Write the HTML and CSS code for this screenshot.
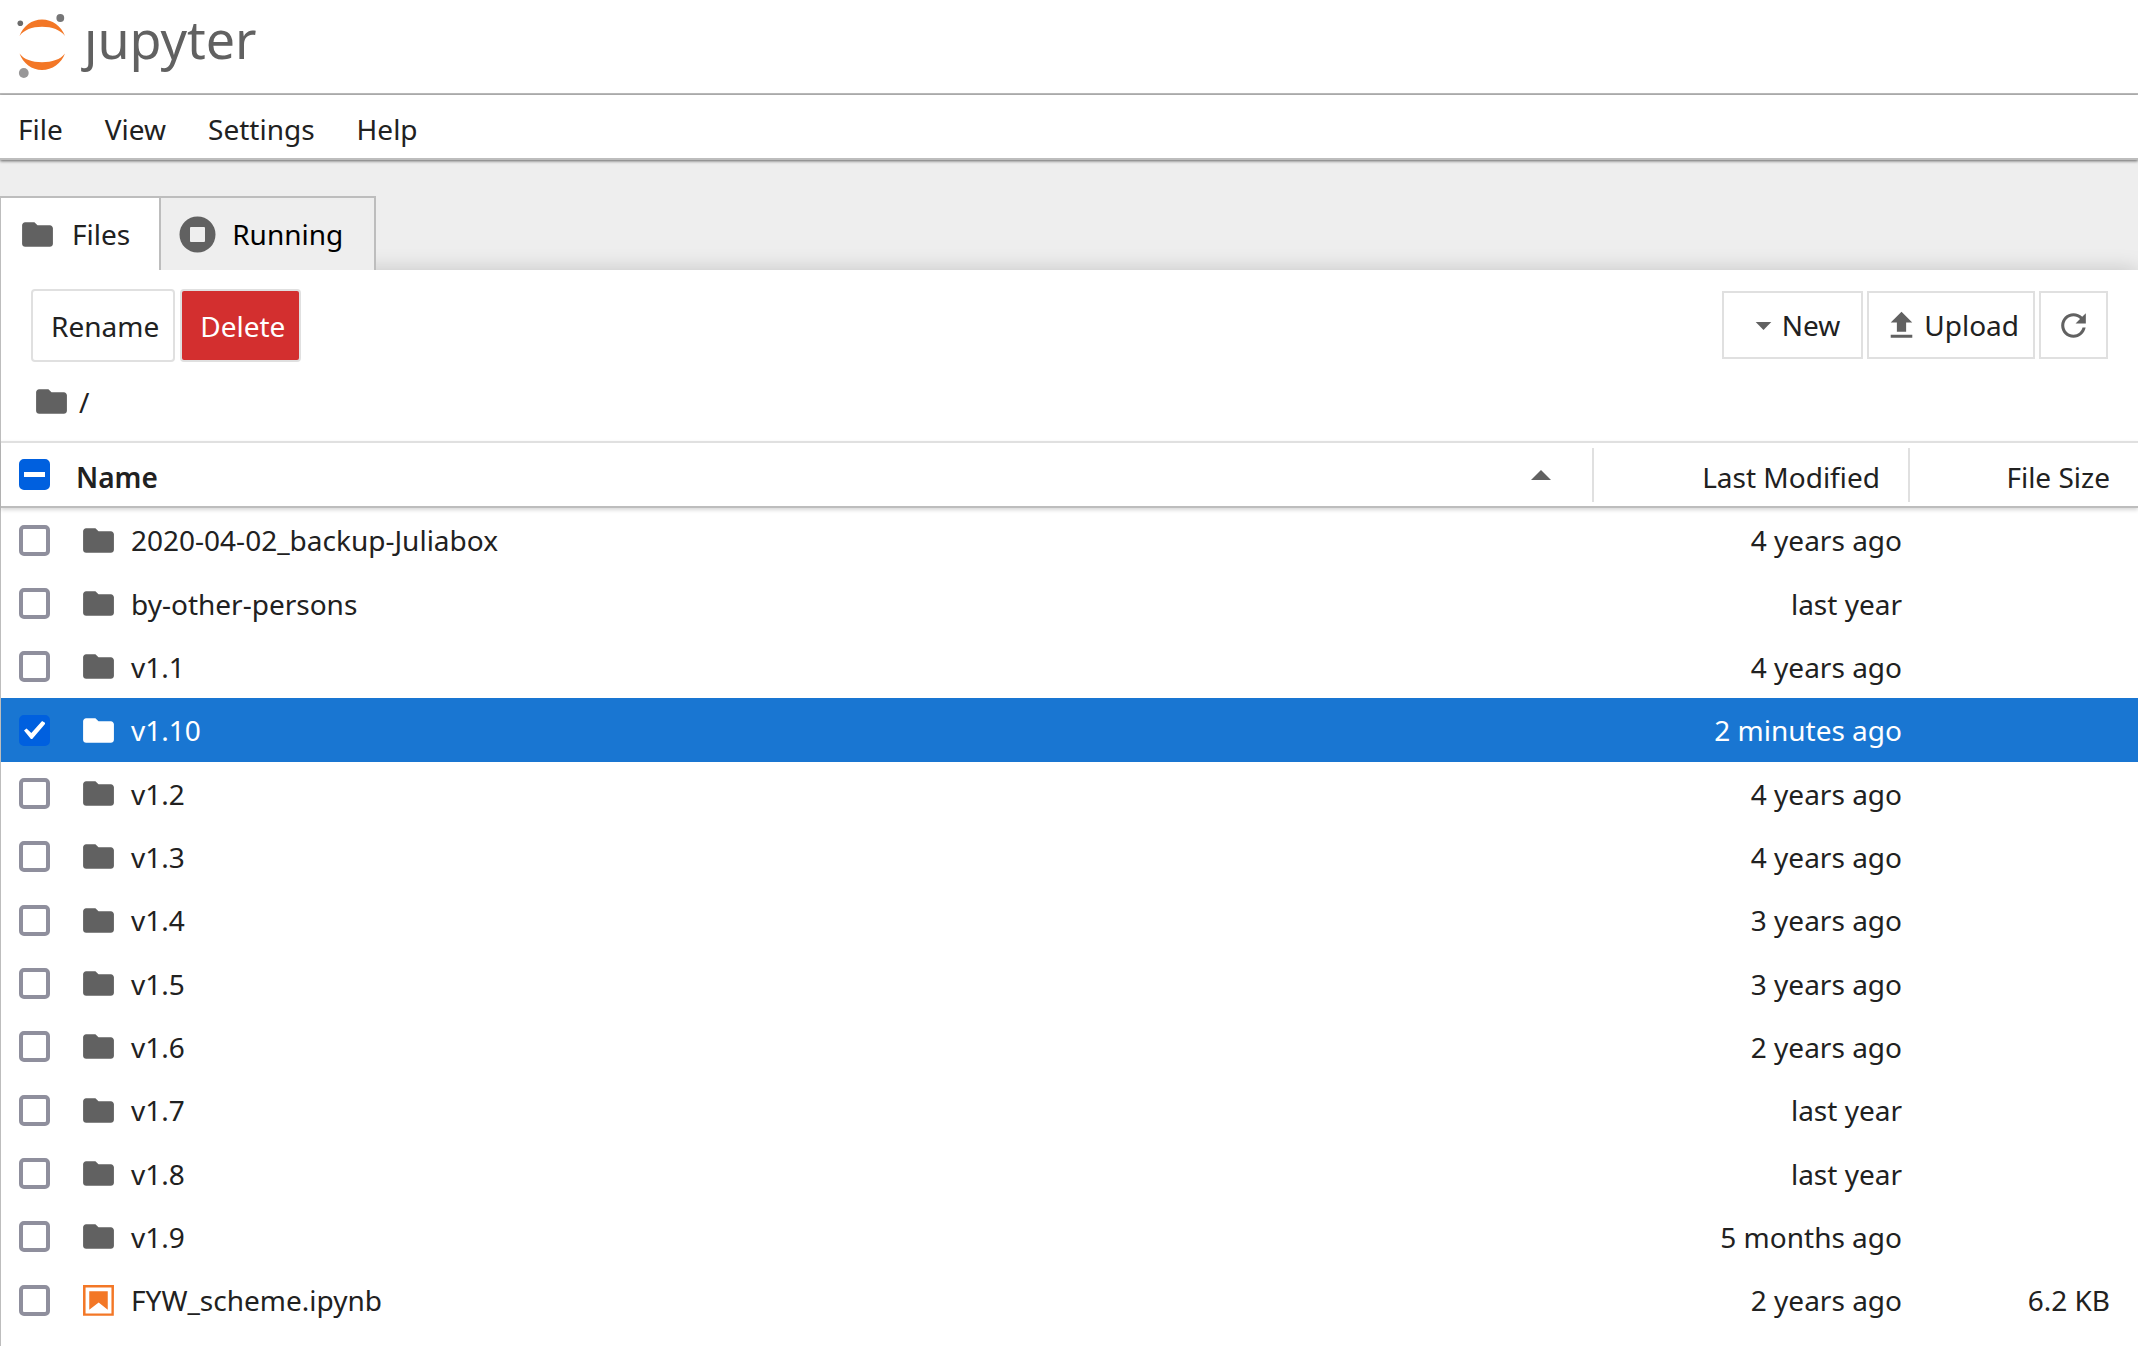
FILE: index.html
```html
<!DOCTYPE html>
<html lang="en">
<head>
  <meta charset="UTF-8" />
  <meta name="viewport" content="width=device-width, initial-scale=1.0"/>
  <title>Home</title>
  <link rel="stylesheet" href="styles.css">
</head>
<body>
  <!-- Shared icons -->
  <svg class="sprite" aria-hidden="true">
    <symbol id="folder" viewBox="0 0 24 24">
      <path d="M10 4H4c-1.1 0-1.99.9-1.99 2L2 18c0 1.1.9 2 2 2h16c1.1 0 2-.9 2-2V8c0-1.1-.9-2-2-2h-8l-2-2z"/>
    </symbol>
    <symbol id="notebook" viewBox="0 0 22 22">
      <path d="M18.7 3.3v15.4H3.3V3.3h15.4m1.5-1.5H1.8v18.3h18.3l.1-18.3z"/>
      <path d="M16.5 16.5l-5.4-4.3-5.6 4.3v-11h11z"/>
    </symbol>
  </svg>

  <header class="top">
    <svg class="logo" viewBox="0 0 50 66" aria-hidden="true">
      <path fill="#f37726" d="M2.500 22C6 12 15 5.500 25 5.500S44.500 12 48 22C43.500 16 35 12.800 25 12.800S7 16 2.500 22z"/>
      <path fill="#f37726" d="M2.500 39.500C6 49.500 15 56 25 56s19.500-6.500 23-16.500C43.500 45.500 35 48.200 25 48.200S7 45.500 2.500 39.500z"/>
      <circle cx="43.300" cy="4" r="3.900" fill="#767677"/>
      <circle cx="3.300" cy="9.200" r="2.800" fill="#6b6b6b"/>
      <circle cx="6.800" cy="59" r="4.900" fill="#989798"/>
    </svg>
    <span class="logo-text">ȷupyter</span>
  </header>

  <nav class="menu">
    <button type="button">File</button>
    <button type="button">View</button>
    <button type="button">Settings</button>
    <button type="button">Help</button>
  </nav>

  <div class="tabs">
    <button type="button" class="tab active"><svg class="icon"><use href="#folder"/></svg>Files</button>
    <button type="button" class="tab">
      <svg class="icon" viewBox="0 0 37 37"><path fill-rule="evenodd" d="M18.500.500a18 18 0 1 0 0 36 18 18 0 0 0 0-36zM12 11h13q1 0 1 1v13q0 1-1 1H12q-1 0-1-1V12q0-1 1-1z"/></svg>Running
    </button>
  </div>

  <main class="panel">
    <div class="toolbar">
      <div class="actions">
        <button type="button" class="action">Rename</button>
        <button type="button" class="action delete">Delete</button>
      </div>
      <div class="tools">
        <button type="button" class="tool new"><svg class="icon" viewBox="0 0 18 18"><path d="M5.200 7.300h7.600L9 11.200z"/></svg>New</button>
        <button type="button" class="tool upload"><svg class="icon" viewBox="0 0 24 24"><path d="M9 16h6v-6h4l-7-7-7 7h4zm-4 2h14v2H5z"/></svg>Upload</button>
        <button type="button" class="tool refresh" aria-label="Refresh"><svg class="icon" viewBox="0 0 18 18"><path d="M9 13.500c-2.490 0-4.500-2.010-4.500-4.500S6.510 4.500 9 4.500c1.240 0 2.360.52 3.170 1.330L10 8h5V3l-1.760 1.760C12.150 3.680 10.660 3 9 3 5.690 3 3.010 5.690 3.010 9S5.690 15 9 15c2.970 0 5.430-2.160 5.900-5h-1.520c-.46 2-2.240 3.500-4.380 3.500z"/></svg></button>
      </div>
    </div>

    <div class="crumbs"><svg class="icon"><use href="#folder"/></svg><a href="#">/</a></div>

    <table class="files">
      <thead>
        <tr>
          <th class="name">
            <div class="cell">
              <input type="checkbox" id="all" aria-label="Select all">
              <span>Name</span>
              <svg class="sort" viewBox="0 0 20 10"><path d="M0 10L10 0l10 10z"/></svg>
            </div>
          </th>
          <th class="modified"><div class="cell"><span>Last Modified</span></div></th>
          <th class="size"><div class="cell"><span>File Size</span></div></th>
        </tr>
      </thead>
      <tbody>
        <tr>
          <td><div class="cell"><input type="checkbox" id="f1"><label for="f1"><svg class="icon"><use href="#folder"/></svg>2020-04-02_backup-Juliabox</label></div></td>
          <td>4 years ago</td>
          <td></td>
        </tr>
        <tr>
          <td><div class="cell"><input type="checkbox" id="f2"><label for="f2"><svg class="icon"><use href="#folder"/></svg>by-other-persons</label></div></td>
          <td>last year</td>
          <td></td>
        </tr>
        <tr>
          <td><div class="cell"><input type="checkbox" id="f3"><label for="f3"><svg class="icon"><use href="#folder"/></svg>v1.1</label></div></td>
          <td>4 years ago</td>
          <td></td>
        </tr>
        <tr class="selected">
          <td><div class="cell"><input type="checkbox" id="f4" checked><label for="f4"><svg class="icon"><use href="#folder"/></svg>v1.10</label></div></td>
          <td>2 minutes ago</td>
          <td></td>
        </tr>
        <tr>
          <td><div class="cell"><input type="checkbox" id="f5"><label for="f5"><svg class="icon"><use href="#folder"/></svg>v1.2</label></div></td>
          <td>4 years ago</td>
          <td></td>
        </tr>
        <tr>
          <td><div class="cell"><input type="checkbox" id="f6"><label for="f6"><svg class="icon"><use href="#folder"/></svg>v1.3</label></div></td>
          <td>4 years ago</td>
          <td></td>
        </tr>
        <tr>
          <td><div class="cell"><input type="checkbox" id="f7"><label for="f7"><svg class="icon"><use href="#folder"/></svg>v1.4</label></div></td>
          <td>3 years ago</td>
          <td></td>
        </tr>
        <tr>
          <td><div class="cell"><input type="checkbox" id="f8"><label for="f8"><svg class="icon"><use href="#folder"/></svg>v1.5</label></div></td>
          <td>3 years ago</td>
          <td></td>
        </tr>
        <tr>
          <td><div class="cell"><input type="checkbox" id="f9"><label for="f9"><svg class="icon"><use href="#folder"/></svg>v1.6</label></div></td>
          <td>2 years ago</td>
          <td></td>
        </tr>
        <tr>
          <td><div class="cell"><input type="checkbox" id="f10"><label for="f10"><svg class="icon"><use href="#folder"/></svg>v1.7</label></div></td>
          <td>last year</td>
          <td></td>
        </tr>
        <tr>
          <td><div class="cell"><input type="checkbox" id="f11"><label for="f11"><svg class="icon"><use href="#folder"/></svg>v1.8</label></div></td>
          <td>last year</td>
          <td></td>
        </tr>
        <tr>
          <td><div class="cell"><input type="checkbox" id="f12"><label for="f12"><svg class="icon"><use href="#folder"/></svg>v1.9</label></div></td>
          <td>5 months ago</td>
          <td></td>
        </tr>
        <tr>
          <td><div class="cell"><input type="checkbox" id="f13"><label for="f13"><svg class="icon orange"><use href="#notebook"/></svg>FYW_scheme.ipynb</label></div></td>
          <td>2 years ago</td>
          <td>6.2 KB</td>
        </tr>
      </tbody>
    </table>
  </main>

  <script>
    // some rows are selected, but not all
    document.getElementById('all').indeterminate = true;
  </script>
</body>
</html>
```
FILE: styles.css
```css
* {
  box-sizing: border-box;
}
body {
  margin: 0;
  min-height: 100vh;
  display: flex;
  flex-direction: column;
  background: #eee;
  color: #212121;
  font-family: "Segoe UI", "Noto Sans", sans-serif;
  font-size: 28px;
  line-height: 40px;
}
button {
  margin: 0;
  padding: 0;
  border: 0;
  background: none;
  color: inherit;
  font: inherit;
}
.sprite {
  display: none;
}
.icon {
  width: 37px;
  height: 37px;
  flex: none;
  fill: #616161;
}
.orange {
  fill: #f37726;
}

.top {
  display: flex;
  gap: 17px;
  height: 95px;
  padding: 14px 17px;
  background: #fff;
  border-bottom: 2px solid #bdbdbd;
}
.logo {
  width: 50px;
  height: 66px;
}
.logo-text {
  color: #616161;
  font-family: "Noto Sans", sans-serif;
  font-size: 52px;
  line-height: 50px;
}

.menu {
  position: relative;
  display: flex;
  gap: 42px;
  height: 65px;
  padding: 4px 18px 0;
  background: #fff;
  border-bottom: 2px solid #bdbdbd;
  box-shadow: 0 1px 3px rgba(0,0,0,0.6);
}

.tabs {
  display: flex;
  margin-top: 36px;
  z-index: 1;
}
.tab {
  display: flex;
  align-items: center;
  gap: 16px;
  height: 74px;
  padding: 0 31px 0 18px;
  border: 2px solid #bdbdbd;
  border-width: 2px 2px 0 0;
  background: #eee;
  color: #000;
}
.tab.active {
  border-left-width: 1px;
  padding-right: 29px;
  background: #fff;
  color: #212121;
}

.panel {
  flex: 1;
  background: #fff;
  border-left: 1px solid #bdbdbd;
  box-shadow: 0 0 20px rgba(0,0,0,0.18);
}
.toolbar {
  display: flex;
  justify-content: space-between;
  padding: 19px 30px 0;
}
.actions {
  display: flex;
  gap: 5px;
}
.action {
  height: 73px;
  padding: 0 14px 0 18px;
  border: 2px solid #e0e0e0;
  border-radius: 4px;
}
.delete {
  background: #d32f2f;
  color: #fff;
}
.tools {
  display: flex;
  gap: 4px;
  padding-top: 2px;
}
.tool {
  display: flex;
  align-items: center;
  height: 68px;
  border: 2px solid #e0e0e0;
}
.new {
  padding: 0 21px;
}
.upload {
  gap: 4px;
  padding: 0 14px;
}
.refresh {
  padding: 0 14px;
}
.crumbs {
  display: flex;
  align-items: center;
  gap: 9px;
  height: 79px;
  padding-left: 32px;
}
.crumbs a {
  color: inherit;
  text-decoration: none;
}

.files {
  width: 100%;
  table-layout: fixed;
  border-collapse: separate;
  border-spacing: 0;
}
.files th {
  height: 67px;
  padding: 0;
  border-top: 2px solid #e0e0e0;
  border-bottom: 2px solid #bdbdbd;
  font-weight: 400;
}
.files thead {
  box-shadow: 0 2px 4px rgba(0,0,0,0.16);
}
.files .modified {
  width: 316px;
}
.files .size {
  width: 230px;
}
.cell {
  display: flex;
  align-items: center;
  padding-left: 18px;
}
th .cell {
  height: 54px;
}
th.name {
  font-weight: 600;
}
th span {
  padding-top: 4px;
}
th.name span {
  padding-left: 26px;
}
th.modified .cell,
th.size .cell {
  justify-content: flex-end;
  padding-right: 28px;
  border-left: 2px solid #e0e0e0;
}
.sort {
  width: 20px;
  height: 10px;
  margin-left: auto;
  margin-right: 41px;
  fill: #616161;
}
.files td {
  height: 63px;
  padding: 0;
}
.files tr:nth-child(3n+1) td {
  height: 64px;
}
.files td + td {
  padding-right: 6px;
  text-align: right;
}
.files td:last-child {
  padding-right: 28px;
}
.cell label {
  display: flex;
  align-items: center;
  gap: 14px;
  padding-left: 30px;
}
.selected td {
  background: #1976d2;
  color: #fff;
}
.selected .icon {
  fill: #fff;
}

input[type="checkbox"] {
  appearance: none;
  display: grid;
  place-items: center;
  flex: none;
  width: 31px;
  height: 31px;
  margin: 0;
  border: 4px solid #8f8f9d;
  border-radius: 5px;
  background: #fff;
}
input[type="checkbox"]:checked,
input[type="checkbox"]:indeterminate {
  border-color: #0060df;
  background: #0060df;
}
input[type="checkbox"]:checked::after {
  content: "";
  width: 21px;
  height: 18px;
  background: #fff;
  clip-path: polygon(0 53%, 12% 42%, 35% 66%, 86% 0, 100% 10%, 100% 17%, 39% 100%, 33% 100%);
}
input[type="checkbox"]:indeterminate::after {
  content: "";
  width: 21px;
  height: 5px;
  background: #fff;
}
```
